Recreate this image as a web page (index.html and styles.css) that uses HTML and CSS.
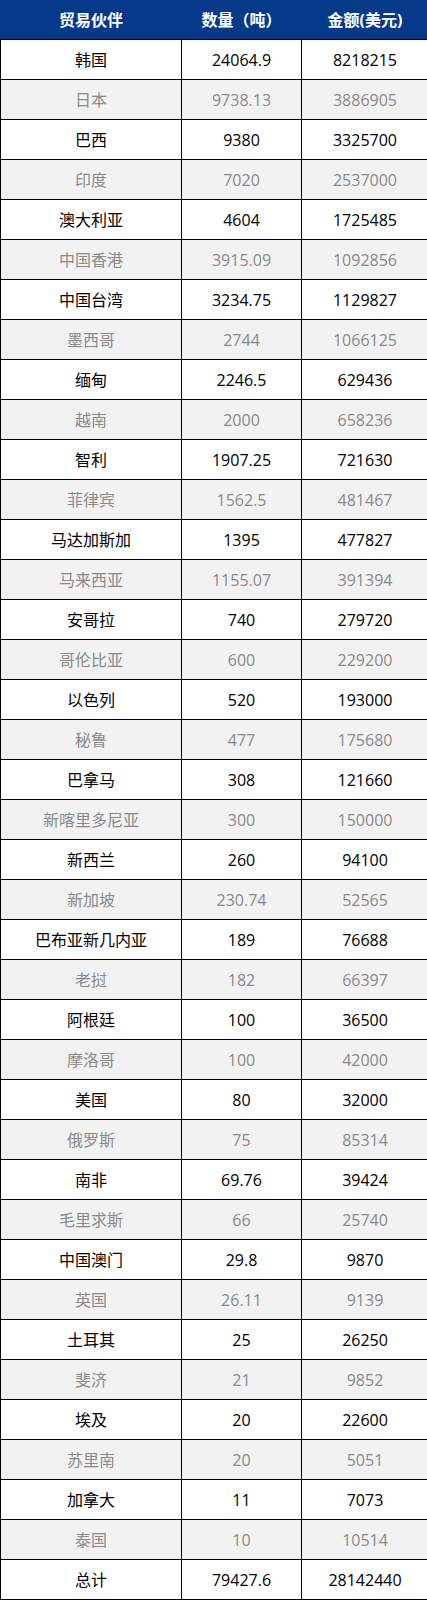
FILE: index.html
```html
<!DOCTYPE html>
<html lang="zh">
<head>
<meta charset="utf-8">
<link rel="stylesheet" href="styles.css">
</head>
<body>
<table class="trade">
<thead>
<tr><th class="c1">贸易伙伴</th><th class="c2">数量（吨）</th><th class="c3">金额(美元)</th></tr>
</thead>
<tbody>
<tr class="odd"><td>韩国</td><td>24064.9</td><td>8218215</td></tr>
<tr class="even"><td>日本</td><td>9738.13</td><td>3886905</td></tr>
<tr class="odd"><td>巴西</td><td>9380</td><td>3325700</td></tr>
<tr class="even"><td>印度</td><td>7020</td><td>2537000</td></tr>
<tr class="odd"><td>澳大利亚</td><td>4604</td><td>1725485</td></tr>
<tr class="even"><td>中国香港</td><td>3915.09</td><td>1092856</td></tr>
<tr class="odd"><td>中国台湾</td><td>3234.75</td><td>1129827</td></tr>
<tr class="even"><td>墨西哥</td><td>2744</td><td>1066125</td></tr>
<tr class="odd"><td>缅甸</td><td>2246.5</td><td>629436</td></tr>
<tr class="even"><td>越南</td><td>2000</td><td>658236</td></tr>
<tr class="odd"><td>智利</td><td>1907.25</td><td>721630</td></tr>
<tr class="even"><td>菲律宾</td><td>1562.5</td><td>481467</td></tr>
<tr class="odd"><td>马达加斯加</td><td>1395</td><td>477827</td></tr>
<tr class="even"><td>马来西亚</td><td>1155.07</td><td>391394</td></tr>
<tr class="odd"><td>安哥拉</td><td>740</td><td>279720</td></tr>
<tr class="even"><td>哥伦比亚</td><td>600</td><td>229200</td></tr>
<tr class="odd"><td>以色列</td><td>520</td><td>193000</td></tr>
<tr class="even"><td>秘鲁</td><td>477</td><td>175680</td></tr>
<tr class="odd"><td>巴拿马</td><td>308</td><td>121660</td></tr>
<tr class="even"><td>新喀里多尼亚</td><td>300</td><td>150000</td></tr>
<tr class="odd"><td>新西兰</td><td>260</td><td>94100</td></tr>
<tr class="even"><td>新加坡</td><td>230.74</td><td>52565</td></tr>
<tr class="odd"><td>巴布亚新几内亚</td><td>189</td><td>76688</td></tr>
<tr class="even"><td>老挝</td><td>182</td><td>66397</td></tr>
<tr class="odd"><td>阿根廷</td><td>100</td><td>36500</td></tr>
<tr class="even"><td>摩洛哥</td><td>100</td><td>42000</td></tr>
<tr class="odd"><td>美国</td><td>80</td><td>32000</td></tr>
<tr class="even"><td>俄罗斯</td><td>75</td><td>85314</td></tr>
<tr class="odd"><td>南非</td><td>69.76</td><td>39424</td></tr>
<tr class="even"><td>毛里求斯</td><td>66</td><td>25740</td></tr>
<tr class="odd"><td>中国澳门</td><td>29.8</td><td>9870</td></tr>
<tr class="even"><td>英国</td><td>26.11</td><td>9139</td></tr>
<tr class="odd"><td>土耳其</td><td>25</td><td>26250</td></tr>
<tr class="even"><td>斐济</td><td>21</td><td>9852</td></tr>
<tr class="odd"><td>埃及</td><td>20</td><td>22600</td></tr>
<tr class="even"><td>苏里南</td><td>20</td><td>5051</td></tr>
<tr class="odd"><td>加拿大</td><td>11</td><td>7073</td></tr>
<tr class="even"><td>泰国</td><td>10</td><td>10514</td></tr>
<tr class="odd total"><td>总计</td><td>79427.6</td><td>28142440</td></tr>
</tbody>
</table>
</body>
</html>
```
FILE: styles.css
```css
html, body {
  margin: 0;
  padding: 0;
  background: #ffffff;
}
.trade {
  border-collapse: collapse;
  width: 427px;
  table-layout: fixed;
  font-family: "Open Sans", "Noto Sans CJK SC", sans-serif;
  font-size: 16px;
}
.trade th, .trade td {
  padding: 0;
  text-align: center;
  vertical-align: middle;
  line-height: 20px;
}
.trade th {
  height: 38px;
  background: #053a8b;
  color: #ffffff;
  font-weight: bold;
  border: 1px solid #053a8b;
  border-bottom: 1px solid #000000;
}
.trade th + th {
  border-left: 1px solid #000000;
}
.trade th.c3 {
  border-right: 1px solid #000000;
}
.c1 { width: 180px; }
.c2 { width: 119px; }
.c3 { width: 126px; }
.trade td {
  height: 39px;
  border: 1px solid #000000;
}
.trade tr.odd td {
  background: #ffffff;
  color: #000000;
}
.trade tr.even td {
  background: #f2f2f2;
  color: #8a8a8a;
}
```
